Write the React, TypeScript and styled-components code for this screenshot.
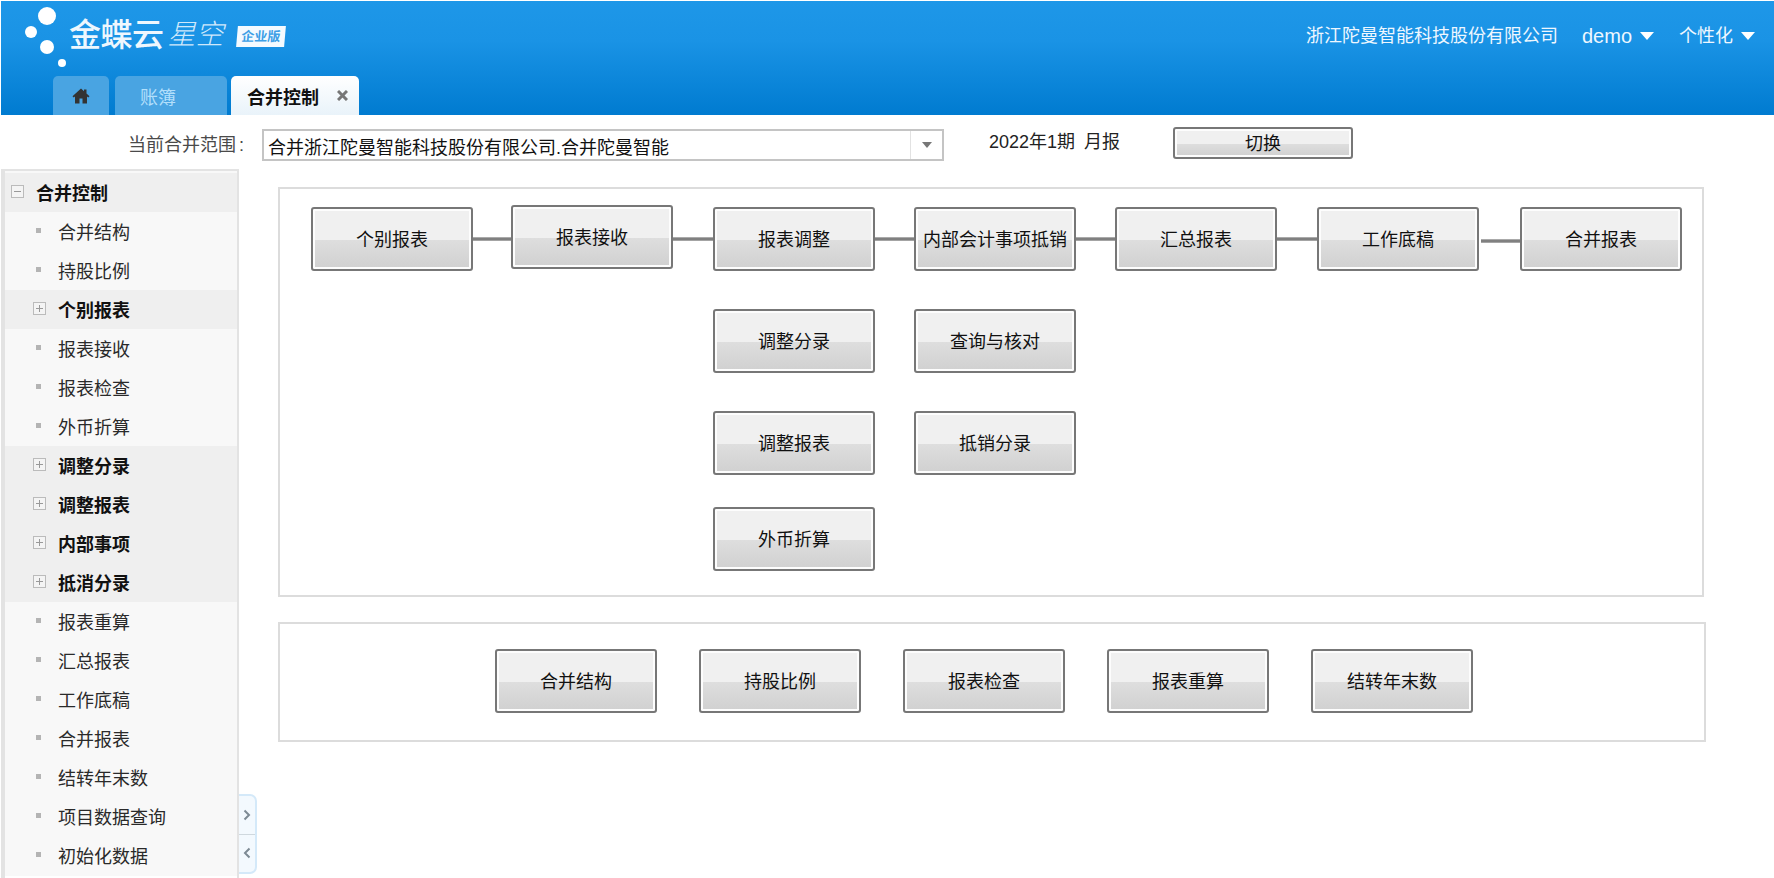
import React from 'react';
import styled, { createGlobalStyle } from 'styled-components';

const GlobalStyle = createGlobalStyle`
  html, body {
    margin: 0;
    padding: 0;
    height: 100%;
    overflow: hidden;
    background: #fff;
    font-family: "Liberation Sans", "Noto Sans CJK SC", sans-serif;
    font-size: 18px;
    color: #222;
  }
  * { box-sizing: border-box; }
`;

const Page = styled.div`
  width: 1774px;
  height: 878px;
  overflow: hidden;
  padding-top: 1px;
  display: flex;
  flex-direction: column;
`;

const Header = styled.header`
  height: 114px;
  margin-left: 1px;
  flex-shrink: 0;
  display: flex;
  flex-direction: column;
  justify-content: space-between;
  background: linear-gradient(#1e97e8, #1a93e5 35%, #007bd0);
`;

const TopBar = styled.div`
  height: 70px;
  display: flex;
  justify-content: space-between;
  align-items: flex-start;
`;

const Logo = styled.div`
  display: flex;
  align-items: flex-start;
`;

const LogoDots = styled.svg`
  width: 68px;
  height: 70px;
  flex-shrink: 0;
`;

const LogoMain = styled.span`
  margin-top: 12px;
  font-size: 32px;
  line-height: 44px;
  font-weight: 500;
  letter-spacing: -0.5px;
  color: #eef7fe;
  white-space: nowrap;
`;

const LogoSub = styled.span`
  margin: 12px 0 0 4px;
  font-size: 28px;
  line-height: 44px;
  font-weight: 300;
  font-style: italic;
  color: #cfe8fb;
  white-space: nowrap;
`;

const LogoBadge = styled.span`
  margin: 25px 0 0 13px;
  width: 48px;
  height: 21px;
  background: #f4faff;
  color: #3d9fe6;
  font-size: 13px;
  font-weight: 700;
  line-height: 21px;
  text-align: center;
  transform: skewX(-5deg);
  white-space: nowrap;
`;

const UserNav = styled.nav`
  display: flex;
  align-items: center;
  height: 70px;
  padding-right: 19px;
  color: #eef7ff;
`;

const NavItem = styled.span<{ gap?: number; latin?: boolean }>`
  display: flex;
  align-items: center;
  margin-left: ${({ gap }) => gap ?? 0}px;
  font-size: ${({ latin }) => (latin ? 20 : 18)}px;
  white-space: nowrap;
  line-height: 24px;
`;

const NavCaret = styled.i`
  width: 0;
  height: 0;
  margin-left: 8px;
  border-left: 7px solid transparent;
  border-right: 7px solid transparent;
  border-top: 8px solid #fff;
`;

const TabBar = styled.div`
  display: flex;
  align-items: flex-end;
  height: 39px;
  padding-left: 52px;
`;

const Tab = styled.div<{ width: number; active?: boolean; gap?: number; inset?: number }>`
  width: ${({ width }) => width}px;
  height: 39px;
  margin-right: ${({ gap }) => gap ?? 0}px;
  padding-left: ${({ inset }) => inset ?? 0}px;
  display: flex;
  align-items: center;
  justify-content: ${({ inset }) => (inset ? 'flex-start' : 'center')};
  border-radius: 5px 5px 0 0;
  background: ${({ active }) => (active ? 'linear-gradient(#ffffff, #e9f3fa)' : '#49a4e2')};
  color: ${({ active }) => (active ? '#111' : '#b2dffb')};
  font-weight: ${({ active }) => (active ? 700 : 400)};
`;

const TabClose = styled.svg`
  width: 11px;
  height: 11px;
  margin-left: 18px;
  stroke: #777;
  stroke-width: 3;
  fill: none;
`;

const HomeIcon = styled.svg`
  width: 18px;
  height: 18px;
  fill: #333;
`;

const FilterRow = styled.div`
  height: 54px;
  flex-shrink: 0;
  display: flex;
  align-items: flex-start;
  padding-left: 128px;
`;

const FilterLabel = styled.label`
  width: 134px;
  margin-top: 17px;
  color: #4a4a4a;
  line-height: 26px;
  word-spacing: -2px;
  white-space: pre;
`;

const ComboBox = styled.div`
  width: 682px;
  height: 32px;
  margin-top: 14px;
  display: flex;
  border: 2px solid #c4c4c4;
  background: #fff;
`;

const ComboText = styled.span`
  flex: 1;
  padding: 2px 0 0 4px;
  line-height: 30px;
  color: #111;
  white-space: nowrap;
`;

const ComboArrow = styled.span`
  width: 32px;
  display: flex;
  align-items: center;
  justify-content: center;
  border-left: 1px solid #e2e2e2;
  &::before {
    content: '';
    border-left: 5px solid transparent;
    border-right: 5px solid transparent;
    border-top: 6px solid #777;
  }
`;

const Period = styled.span`
  margin: 14px 0 0 45px;
  width: 131px;
  display: flex;
  justify-content: space-between;
  line-height: 26px;
  color: #222;
  white-space: nowrap;
`;

const Body = styled.div`
  flex: 1;
  display: flex;
  min-height: 0;
`;

const SidebarWrap = styled.div`
  position: relative;
  width: 240px;
  flex-shrink: 0;
`;

const Sidebar = styled.aside`
  width: 238px;
  height: 100%;
  margin-left: 1px;
  border: 2px solid #e3e3e3;
  border-left-width: 4px;
  border-bottom: 0;
  padding-top: 2px;
  background: linear-gradient(#f8f8f8, #f8f8f8 705px, #fff 705px);
  overflow: hidden;
`;

const TreeRow = styled.div<{ section?: boolean }>`
  height: 39px;
  padding-bottom: 2px;
  display: flex;
  align-items: center;
  background: ${({ section }) => (section ? '#efefef' : 'transparent')};
  font-weight: ${({ section }) => (section ? 700 : 400)};
  color: ${({ section }) => (section ? '#111' : '#2a2a2a')};
  white-space: nowrap;
`;

const ToggleBox = styled.span<{ indent: number }>`
  position: relative;
  width: 13px;
  height: 13px;
  margin-left: ${({ indent }) => indent}px;
  margin-right: 12px;
  flex-shrink: 0;
  border: 1px solid #bbb;
  background: #f4f4f4;
  &::before {
    content: '';
    position: absolute;
    left: 2px;
    right: 2px;
    top: 5px;
    height: 1px;
    background: #999;
  }
`;

const PlusBox = styled(ToggleBox)`
  &::after {
    content: '';
    position: absolute;
    top: 2px;
    bottom: 2px;
    left: 5px;
    width: 1px;
    background: #999;
  }
`;

const Bullet = styled.i`
  width: 5px;
  height: 5px;
  margin-left: 31px;
  margin-right: 17px;
  flex-shrink: 0;
  background: #b4b4b4;
`;

const CollapseHandle = styled.div`
  position: absolute;
  left: 239px;
  bottom: 4px;
  width: 18px;
  height: 80px;
  display: flex;
  flex-direction: column;
  border: 2px solid #d4e9f9;
  border-left: 0;
  border-radius: 0 7px 7px 0;
  background: #f3f9fe;
`;

const HandlePart = styled.span`
  flex: 1;
  display: flex;
  align-items: center;
  justify-content: center;
  & + & { border-top: 1px solid #cfd8de; }
`;

const Chevron = styled.svg`
  width: 8px;
  height: 12px;
  fill: none;
  stroke: #7d8a94;
  stroke-width: 2;
`;

const Main = styled.main`
  flex: 1;
  padding: 18px 0 0 38px;
`;

const FlowPanel = styled.section`
  width: 1426px;
  height: 410px;
  padding: 18px 0 0 31px;
  border: 2px solid #dcdcdc;
`;

const ShortcutPanel = styled.section`
  width: 1428px;
  height: 120px;
  margin-top: 25px;
  padding: 25px 0 0 215px;
  display: flex;
  gap: 42px;
  border: 2px solid #dcdcdc;
`;

const FlowRow = styled.div<{ top?: number; indent?: number }>`
  display: flex;
  align-items: flex-start;
  margin-top: ${({ top }) => top ?? 0}px;
  padding-left: ${({ indent }) => indent ?? 0}px;
`;

const FlowButton = styled.button<{ raised?: boolean; right?: number }>`
  width: 162px;
  height: 64px;
  margin-top: ${({ raised }) => (raised ? -2 : 0)}px;
  margin-right: ${({ right }) => right ?? 0}px;
  flex-shrink: 0;
  padding: 2px 0 0;
  border: 2px solid #777;
  border-radius: 3px;
  box-shadow: inset 0 0 0 2px #fdfdfd;
  background: linear-gradient(#f0f0f0 0, #f0f0f0 52%, #dedede 52%, #d0d0d0 100%);
  font-family: inherit;
  font-size: 18px;
  line-height: 1;
  color: #111;
`;

const SwitchButton = styled(FlowButton)`
  width: 180px;
  height: 32px;
  margin: 12px 0 0 53px;
`;

const Connector = styled.i<{ width: number; low?: boolean }>`
  width: ${({ width }) => width}px;
  height: 4px;
  margin-top: ${({ low }) => (low ? 32 : 30)}px;
  margin-left: ${({ low }) => (low ? 2 : 0)}px;
  flex-shrink: 0;
  background: linear-gradient(#aaa 25%, #808080 25%, #808080 75%, #a4a4a4 75%);
`;

type Node = { label: string; kind: 'section' | 'group' | 'leaf' };

const treeNodes: Node[] = [
  { label: '合并控制', kind: 'section' },
  { label: '合并结构', kind: 'leaf' },
  { label: '持股比例', kind: 'leaf' },
  { label: '个别报表', kind: 'group' },
  { label: '报表接收', kind: 'leaf' },
  { label: '报表检查', kind: 'leaf' },
  { label: '外币折算', kind: 'leaf' },
  { label: '调整分录', kind: 'group' },
  { label: '调整报表', kind: 'group' },
  { label: '内部事项', kind: 'group' },
  { label: '抵消分录', kind: 'group' },
  { label: '报表重算', kind: 'leaf' },
  { label: '汇总报表', kind: 'leaf' },
  { label: '工作底稿', kind: 'leaf' },
  { label: '合并报表', kind: 'leaf' },
  { label: '结转年末数', kind: 'leaf' },
  { label: '项目数据查询', kind: 'leaf' },
  { label: '初始化数据', kind: 'leaf' },
];

const shortcuts = ['合并结构', '持股比例', '报表检查', '报表重算', '结转年末数'];

export default function App() {
  return (
    <>
      <GlobalStyle />
      <Page>
        <Header>
          <TopBar>
            <Logo>
              <LogoDots viewBox="0 0 68 70">
                <circle cx="46" cy="15" r="9" fill="#fff" />
                <circle cx="30" cy="31" r="6" fill="#fff" />
                <circle cx="46" cy="46" r="7" fill="#fff" />
                <circle cx="61" cy="62" r="4" fill="#fff" />
              </LogoDots>
              <LogoMain>金蝶云</LogoMain>
              <LogoSub>星空</LogoSub>
              <LogoBadge>企业版</LogoBadge>
            </Logo>
            <UserNav>
              <NavItem>浙江陀曼智能科技股份有限公司</NavItem>
              <NavItem gap={24} latin>demo<NavCaret /></NavItem>
              <NavItem gap={25}>个性化<NavCaret /></NavItem>
            </UserNav>
          </TopBar>
          <TabBar>
            <Tab width={56} gap={6}>
              <HomeIcon viewBox="0 0 18 18">
                <path d="M9 1.5 0.5 9.2l1.2 1.3L3 9.4V16.5h4.5v-5h3v5H15V9.4l1.3 1.1 1.2-1.3L14.5 6.5V2.5h-2.5v1.8z" />
              </HomeIcon>
            </Tab>
            <Tab width={112} gap={4} inset={25}>账簿</Tab>
            <Tab width={128} active inset={16}>
              合并控制
              <TabClose viewBox="0 0 11 11"><path d="M1 1l9 9M10 1l-9 9" /></TabClose>
            </Tab>
          </TabBar>
        </Header>

        <FilterRow>
          <FilterLabel>当前合并范围 :</FilterLabel>
          <ComboBox>
            <ComboText>合并浙江陀曼智能科技股份有限公司.合并陀曼智能</ComboText>
            <ComboArrow />
          </ComboBox>
          <Period>
            <span>2022年1期</span>
            <span>月报</span>
          </Period>
          <SwitchButton>切换</SwitchButton>
        </FilterRow>

        <Body>
          <SidebarWrap>
            <Sidebar>
              {treeNodes.map((node) => (
                <TreeRow key={node.label} section={node.kind !== 'leaf'}>
                  {node.kind === 'section' && <ToggleBox indent={6} />}
                  {node.kind === 'group' && <PlusBox indent={28} />}
                  {node.kind === 'leaf' && <Bullet />}
                  {node.label}
                </TreeRow>
              ))}
            </Sidebar>
            <CollapseHandle>
              <HandlePart>
                <Chevron viewBox="0 0 8 12"><path d="M1.5 1.5 6 6l-4.5 4.5" /></Chevron>
              </HandlePart>
              <HandlePart>
                <Chevron viewBox="0 0 8 12"><path d="M6.5 1.5 2 6l4.5 4.5" /></Chevron>
              </HandlePart>
            </CollapseHandle>
          </SidebarWrap>

          <Main>
            <FlowPanel>
              <FlowRow>
                <FlowButton>个别报表</FlowButton>
                <Connector width={38} />
                <FlowButton raised>报表接收</FlowButton>
                <Connector width={40} />
                <FlowButton>报表调整</FlowButton>
                <Connector width={39} />
                <FlowButton>内部会计事项抵销</FlowButton>
                <Connector width={39} />
                <FlowButton>汇总报表</FlowButton>
                <Connector width={40} />
                <FlowButton>工作底稿</FlowButton>
                <Connector width={39} low />
                <FlowButton>合并报表</FlowButton>
              </FlowRow>
              <FlowRow top={38} indent={402}>
                <FlowButton right={39}>调整分录</FlowButton>
                <FlowButton>查询与核对</FlowButton>
              </FlowRow>
              <FlowRow top={38} indent={402}>
                <FlowButton right={39}>调整报表</FlowButton>
                <FlowButton>抵销分录</FlowButton>
              </FlowRow>
              <FlowRow top={32} indent={402}>
                <FlowButton>外币折算</FlowButton>
              </FlowRow>
            </FlowPanel>
            <ShortcutPanel>
              {shortcuts.map((label) => (
                <FlowButton key={label}>{label}</FlowButton>
              ))}
            </ShortcutPanel>
          </Main>
        </Body>
      </Page>
    </>
  );
}
